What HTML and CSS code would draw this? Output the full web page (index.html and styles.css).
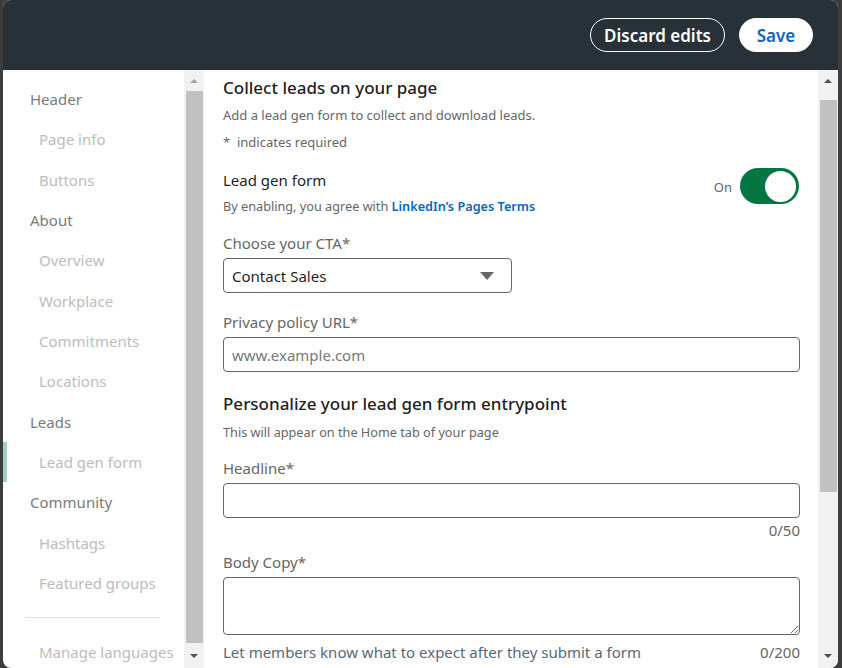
FILE: index.html
```html
<!DOCTYPE html>
<html lang="en">
<head>
<meta charset="utf-8">
<title>Edit page – Lead gen form</title>
<link rel="stylesheet" href="styles.css">
</head>
<body>
<div class="modal">
  <header class="modal-head">
    <button class="btn btn-outline" type="button">Discard edits</button>
    <button class="btn btn-save" type="button">Save</button>
  </header>
  <div class="modal-body">
    <nav class="sidenav">
      <div class="nav-item nav-section">Header</div>
      <div class="nav-item nav-sub">Page info</div>
      <div class="nav-item nav-sub">Buttons</div>
      <div class="nav-item nav-section">About</div>
      <div class="nav-item nav-sub">Overview</div>
      <div class="nav-item nav-sub">Workplace</div>
      <div class="nav-item nav-sub">Commitments</div>
      <div class="nav-item nav-sub">Locations</div>
      <div class="nav-item nav-section">Leads</div>
      <div class="nav-item nav-sub is-active">Lead gen form</div>
      <div class="nav-item nav-section">Community</div>
      <div class="nav-item nav-sub">Hashtags</div>
      <div class="nav-item nav-sub">Featured groups</div>
      <hr class="nav-sep">
      <div class="nav-item nav-sub">Manage languages</div>
    </nav>
    <div class="scrollbar scrollbar-left">
      <div class="sb-btn"><span class="tri tri-up tri-light"></span></div>
      <div class="sb-thumb sb-thumb-fill"></div>
      <div class="sb-btn sb-btn-bottom"><span class="tri tri-down"></span></div>
    </div>
    <main class="content">
      <h2 class="title">Collect leads on your page</h2>
      <p class="desc">Add a lead gen form to collect and download leads.</p>
      <p class="desc req">* &nbsp;indicates required</p>

      <div class="toggle-row">
        <div class="toggle-text">
          <div class="toggle-label">Lead gen form</div>
          <div class="small">By enabling, you agree with <a class="link" href="#">LinkedIn’s Pages Terms</a></div>
        </div>
        <div class="toggle">
          <span class="toggle-state">On</span>
          <span class="switch"><span class="knob"></span></span>
        </div>
      </div>

      <div class="field">
        <label class="label">Choose your CTA*</label>
        <div class="select">
          <span>Contact Sales</span>
          <svg class="caret" width="14" height="8" viewBox="0 0 14 8"><path d="M0 0h14L7 8z" fill="#666"/></svg>
        </div>
      </div>

      <div class="field field-url">
        <label class="label">Privacy policy URL*</label>
        <div class="input placeholder">www.example.com</div>
      </div>

      <h2 class="title title-2">Personalize your lead gen form entrypoint</h2>
      <p class="small hint">This will appear on the Home tab of your page</p>

      <div class="field field-tight">
        <label class="label">Headline*</label>
        <div class="input"></div>
        <div class="counter">0/50</div>
      </div>

      <div class="field field-body">
        <label class="label">Body Copy*</label>
        <textarea class="textarea"></textarea>
        <div class="help-row">
          <span class="help">Let members know what to expect after they submit a form</span>
          <span class="counter-inline">0/200</span>
        </div>
      </div>
    </main>
    <div class="scrollbar scrollbar-right">
      <div class="sb-btn"><span class="tri tri-up"></span></div>
      <div class="sb-thumb sb-thumb-main"></div>
      <div class="sb-spacer"></div>
      <div class="sb-btn sb-btn-bottom"><span class="tri tri-down"></span></div>
    </div>
  </div>
</div>
</body>
</html>
```
FILE: styles.css
```css
* { box-sizing: border-box; }

html, body { height: 100%; }

body {
  margin: 0;
  background: #3a3c3e;
  font-family: "Noto Sans", "Open Sans", "Liberation Sans", sans-serif;
  overflow: hidden;
}

.modal {
  margin: 0 4px 0 3px;
  height: 668px;
  background: #fff;
  border-radius: 8px;
  overflow: hidden;
  display: flex;
  flex-direction: column;
}

/* header */
.modal-head {
  height: 70px;
  flex: none;
  background: #283038;
  display: flex;
  justify-content: flex-end;
  align-items: center;
  gap: 14px;
  padding: 0 25px 0 0;
}

.btn {
  height: 34px;
  border-radius: 17px;
  font-family: inherit;
  font-size: 17px;
  font-weight: 600;
  padding: 0;
  cursor: pointer;
  line-height: 1;
  white-space: nowrap;
}

.btn-outline {
  width: 135px;
  background: transparent;
  color: #fff;
  border: 1px solid #fff;
}

.btn-save {
  width: 74px;
  background: #fff;
  color: #0a66c2;
  border: 1px solid #fff;
}

/* body */
.modal-body {
  flex: 1;
  display: flex;
  min-height: 0;
}

.sidenav {
  width: 181px;
  flex: none;
  padding-top: 9px;
}

.nav-item {
  height: 40.33px;
  display: flex;
  align-items: center;
  font-size: 15px;
  white-space: nowrap;
}

.nav-section {
  padding-left: 27px;
  color: #7a7a7a;
}

.nav-sub {
  padding-left: 36px;
  color: #bcbcbc;
}

.is-active {
  position: relative;
}

.is-active::before {
  content: "";
  position: absolute;
  left: 0;
  top: 0;
  bottom: 0;
  width: 4px;
  background: #9fd2bb;
}

.nav-sep {
  margin: 14px 24px 14px 22px;
  border: 0;
  border-top: 1px solid #e3e3e3;
  height: 0;
}

/* scrollbars */
.scrollbar {
  width: 20px;
  flex: none;
  background: #f1f1f1;
  display: flex;
  flex-direction: column;
  align-items: center;
}

.sb-btn {
  height: 21px;
  width: 100%;
  display: flex;
  align-items: center;
  justify-content: center;
  flex: none;
}

.sb-btn-bottom { height: 25px; }

.sb-thumb {
  width: 17px;
  background: #c1c1c1;
}

.sb-thumb-fill { flex: 1; }

.sb-thumb-main {
  height: 392px;
  margin-top: 9px;
  flex: none;
}

.sb-spacer { flex: 1; }

.tri {
  width: 0;
  height: 0;
  border-left: 4px solid transparent;
  border-right: 4px solid transparent;
}

.tri-up { border-bottom: 4px solid #505050; }
.tri-down { border-top: 4px solid #505050; }
.tri-light { border-bottom-color: #a3a3a3; }

/* main content */
.content {
  flex: 1;
  min-width: 0;
  padding: 6px 18px 0 19px;
  color: rgba(0, 0, 0, 0.9);
  overflow: hidden;
}

.title {
  margin: 0;
  font-size: 17px;
  line-height: 24px;
  font-weight: 500;
  color: rgba(0, 0, 0, 0.9);
}

.desc {
  margin: 5px 0 0;
  font-size: 13px;
  line-height: 20px;
  color: #666;
}

.desc.req { margin-top: 7px; }

.small {
  font-size: 12.7px;
  line-height: 18px;
  color: #666;
}

.link {
  color: #0a66c2;
  font-weight: 600;
  text-decoration: none;
}

.toggle-row {
  margin-top: 16px;
  display: flex;
  justify-content: space-between;
  align-items: flex-start;
}

.toggle-label {
  margin-top: 1px;
  font-size: 15px;
  line-height: 22px;
  color: rgba(0, 0, 0, 0.9);
  margin-bottom: 6px;
}

.toggle {
  display: flex;
  align-items: center;
  gap: 8px;
  margin-right: 1px;
}

.toggle-state {
  font-size: 13px;
  color: #666;
  margin-top: 2px;
}

.switch {
  width: 59px;
  height: 36px;
  border-radius: 18px;
  background: #057642;
  display: flex;
  align-items: center;
  justify-content: flex-end;
  padding: 0 3px;
}

.knob {
  width: 31px;
  height: 31px;
  border-radius: 50%;
  background: #fff;
}

.field { margin-top: 17px; }

.field-url { margin-top: 18px; }

.label {
  display: block;
  font-size: 15px;
  line-height: 22px;
  color: #666;
  margin-bottom: 4px;
}

.select {
  width: 289px;
  height: 35px;
  border: 1px solid #666;
  border-radius: 4px;
  display: flex;
  align-items: center;
  justify-content: space-between;
  padding: 0 17px 0 8px;
  font-size: 15px;
  color: rgba(0, 0, 0, 0.9);
}

.caret { display: block; }

.input {
  height: 35px;
  border: 1px solid #666;
  border-radius: 4px;
  padding: 0 8px;
  display: flex;
  align-items: center;
  font-size: 15px;
}

.placeholder { color: #777; }

.title-2 { margin-top: 20px; }

.hint { margin: 7px 0 0; }

.field-tight { margin-top: 16px; }

.counter {
  text-align: right;
  font-size: 15px;
  line-height: 20px;
  margin-top: 2px;
  color: #666;
}

.field-body { margin-top: 11px; }

.textarea {
  display: block;
  width: 100%;
  height: 58px;
  border: 1px solid #666;
  border-radius: 4px;
  resize: vertical;
  font-family: inherit;
  font-size: 15px;
  margin: 0;
}

.help-row {
  display: flex;
  justify-content: space-between;
  margin-top: 7px;
  font-size: 15px;
  line-height: 20px;
}

.help { color: #56687a; }

.counter-inline { color: #666; }
```
